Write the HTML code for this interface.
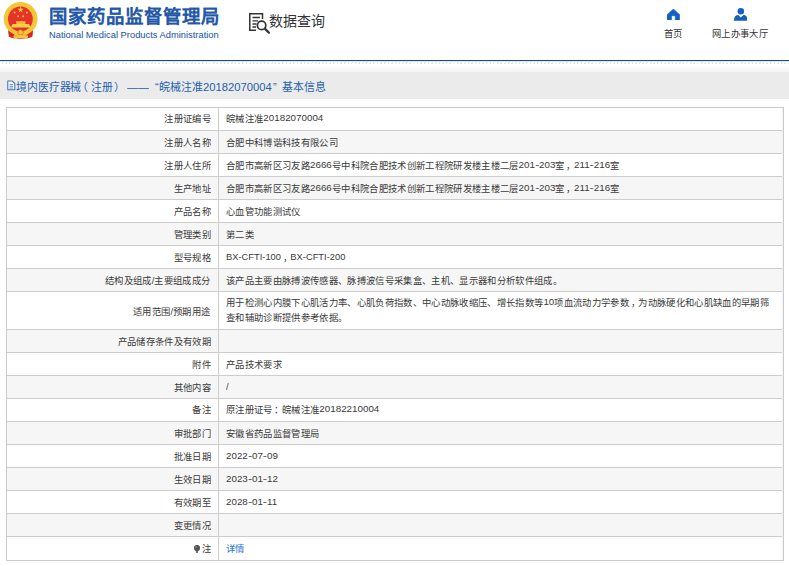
<!DOCTYPE html>
<html lang="zh-CN">
<head>
<meta charset="utf-8">
<title>国家药品监督管理局 数据查询</title>
<style>
html,body{margin:0;padding:0;background:#fff;}
body{width:789px;height:566px;overflow:hidden;position:relative;font-family:"Liberation Sans",sans-serif;color:#333;}
.t,.l,.v{position:absolute;white-space:nowrap;transform:scale(0.778);transform-origin:0 0;}
/* header */
#emblem{position:absolute;left:0;top:0;width:44px;height:44px;}
#title{left:49.3px;top:4px;font-size:23.6px;line-height:32px;font-weight:bold;color:#2357a7;letter-spacing:0.5px;-webkit-text-stroke:0.3px rgba(35,87,167,0.5);}
#sub{left:49.3px;top:29px;font-size:12px;line-height:14px;color:#2357a7;-webkit-text-stroke:0.2px rgba(35,87,167,0.35);}
#dqi{position:absolute;left:247px;top:11px;width:24px;height:24px;}
#dq{left:269.4px;top:10px;font-size:18px;line-height:30px;color:#333;}
.ni{position:absolute;top:8px;}
.nt{top:28px;font-size:12px;line-height:14px;color:#333;}
#line{position:absolute;left:0;top:59.6px;width:789px;height:1.5px;background:#214878;}
#line2{position:absolute;left:0;top:61.1px;width:789px;height:0.8px;background:#d6eefc;}
#dots{position:absolute;left:0;top:62px;width:789px;height:1.7px;background:repeating-linear-gradient(115deg,rgba(255,255,255,0) 0 2.1px,rgba(160,190,225,.38) 2.1px 3.3px);}
#shade{position:absolute;left:0;top:64.5px;width:789px;height:7.5px;background:linear-gradient(#fff,#f3f3f3);}
#band{position:absolute;left:0;top:72px;width:789px;height:26.5px;background:#ebebeb;}
#bicon{position:absolute;left:7.2px;top:80.3px;}
.bt{top:79px;font-size:14px;line-height:20px;color:#1d5fae;}
/* table */
#tb{position:absolute;left:6px;top:107px;width:778px;height:454.2px;box-sizing:border-box;border:1px solid #cbcbcb;}
.r{position:absolute;left:6px;width:778px;background:#fff;}
.hl{position:absolute;left:6px;width:778px;height:1px;background:#cdcdcd;}
.r.e{background:#f6f6f6;}
.l,.v{font-size:12px;line-height:20px;color:#3a3a3a;}
.l{right:578.5px;transform-origin:100% 0;text-align:right;}
.v{left:226px;}
.v b{font-weight:normal;font-size:12.6px;position:relative;top:-1px;}
.v b.x{font-size:12px;}
.v s{text-decoration:none;position:relative;left:2.2px;}
.v s.c{left:2px;}
.v u{display:inline-block;text-decoration:none;transform:scaleX(1.3);margin:0 0.55px;}
#div{position:absolute;left:218px;top:107px;width:1px;height:454px;background:#cdcdcd;}
#rb{position:absolute;left:782px;top:108px;width:1px;height:452px;background:#f1f1f3;}
a{color:#1a73d9;text-decoration:none;}
.pin{display:inline-block;vertical-align:-1.5px;margin-right:2px;}
</style>
</head>
<body>
<!-- header -->
<svg id="emblem" viewBox="0 0 44 44">
 <path d="M8 30 L13.5 32 L14.5 38.6 L9.5 37 Z" fill="#d7261e"/>
 <path d="M33.2 30 L27.7 32 L26.7 38.6 L31.7 37 Z" fill="#d7261e"/>
 <circle cx="20.6" cy="18.9" r="16.9" fill="#f6c637"/>
 <circle cx="20.4" cy="19" r="12.4" fill="#e6332a"/>
 <rect x="16.2" y="21.2" width="9.2" height="3" fill="#f4bd33"/>
 <path d="M12.6 23.9 H29 L30.6 27.4 H11 Z" fill="#f8cf4a"/>
 <path d="M20.6 6.6 l0.75 2.2 h2.3 l-1.85 1.4 l0.7 2.2 l-1.9 -1.35 l-1.9 1.35 l0.7 -2.2 l-1.85 -1.4 h2.3 Z" fill="#f6c637"/>
 <circle cx="14.6" cy="12.5" r="1" fill="#f6c637"/><circle cx="26.8" cy="12.5" r="1" fill="#f6c637"/>
 <circle cx="18.1" cy="16.2" r="1" fill="#f6c637"/><circle cx="23.1" cy="16.2" r="1" fill="#f6c637"/>
 <path d="M8.5 31.5 Q20.6 40 32.7 31.5 L32.5 36.5 Q20.6 41 8.7 36.5 Z" fill="#d7261e"/>
 <circle cx="20.6" cy="32.4" r="2.7" fill="#f6c637" stroke="#e0452c" stroke-width="0.6"/>
 <rect x="13.4" y="35.2" width="14.6" height="2.8" rx="1" fill="#f6c637"/>
</svg>
<div id="title" class="t">国家药品监督管理局</div>
<div id="sub" class="t">National Medical Products Administration</div>
<svg id="dqi" viewBox="0 0 24 24" fill="none" stroke="#333" stroke-width="1.5">
 <path d="M15.5 8 V2.8 H2.8 V19.2 H9"/>
 <path d="M5.5 6.5 H13 M5.5 9.8 H11 M5.5 13 H9.5 M5.5 16 H9" stroke-width="1.3"/>
 <circle cx="14.6" cy="14.4" r="4.2" stroke-width="1.7"/>
 <path d="M17.8 17.6 L22 21.8" stroke-width="2.2" stroke-linecap="round"/>
</svg>
<div id="dq" class="t">数据查询</div>
<svg class="ni" style="left:667.1px;top:8.7px" width="12.8" height="11.8" viewBox="0 0 14 13"><path d="M7 0 L14 6.2 V13 H9 V8 Q9 7.4 8.4 7.4 H5.6 Q5 7.4 5 8 V13 H0 V6.2 Z" fill="#1560c0" stroke="#1560c0" stroke-width="0.6" stroke-linejoin="round"/></svg>
<div class="t nt" style="left:664.1px">首页</div>
<svg class="ni" style="left:733.7px;top:8.3px" width="13.7" height="12.8" viewBox="0 0 15 14"><circle cx="7.5" cy="3.6" r="3.6" fill="#1560c0"/><path d="M0 14 C0 8.5 3 7.6 4.6 7.6 L7.5 10.5 L10.4 7.6 C12 7.6 15 8.5 15 14 Z" fill="#1560c0"/></svg>
<div class="t nt" style="left:712.3px">网上办事大厅</div>
<div id="line"></div><div id="line2"></div><div id="dots"></div><div id="shade"></div>
<div id="band"></div>
<svg id="bicon" width="8.6" height="10.6" viewBox="0 0 10 12" fill="none" stroke="#3a72ba"><path d="M0.9 0.9 H6 L9.1 4 V11.1 H0.9 Z" fill="#fff" stroke-width="1.2"/><path d="M2.8 5.2 H7.2 M2.8 7.2 H7.2 M2.8 9.2 H7.2" stroke-width="0.9"/></svg>
<div class="t bt" style="left:16px">境内医疗器械</div>
<div class="t bt" style="left:77.3px">（</div><div class="t bt" style="left:91.3px">注册</div><div class="t bt" style="left:113.7px">）</div>
<div class="t bt" style="left:126.8px">——</div>
<div class="t bt" style="left:155.2px">“</div><div class="t bt" style="left:159.4px">皖械注准</div><div class="t bt" style="left:203.3px;font-size:14.45px">20182070004</div><div class="t bt" style="left:273.2px">”</div>
<div class="t bt" style="left:281.8px">基本信息</div>
<!-- table -->
<div class="r" style="top:107.5px;height:22.9px"></div>
<div class="l" style="top:111px">注册证编号</div>
<div class="v" style="top:111px">皖械注准<b>20182070004</b></div>
<div class="r e" style="top:130.4px;height:22.9px"></div>
<div class="l" style="top:135px">注册人名称</div>
<div class="v" style="top:135px">合肥中科博谐科技有限公司</div>
<div class="r" style="top:153.3px;height:23.0px"></div>
<div class="l" style="top:158px">注册人住所</div>
<div class="v" style="top:158px">合肥市高新区习友路<b>2666</b>号中科院合肥技术创新工程院研发楼主楼二层<b>201<u>-</u>203</b>室<s>，</s><b>211<u>-</u>216</b>室</div>
<div class="r e" style="top:176.3px;height:22.9px"></div>
<div class="l" style="top:181px">生产地址</div>
<div class="v" style="top:181px">合肥市高新区习友路<b>2666</b>号中科院合肥技术创新工程院研发楼主楼二层<b>201<u>-</u>203</b>室<s>，</s><b>211<u>-</u>216</b>室</div>
<div class="r" style="top:199.2px;height:23.0px"></div>
<div class="l" style="top:204px">产品名称</div>
<div class="v" style="top:204px">心血管功能测试仪</div>
<div class="r e" style="top:222.2px;height:22.9px"></div>
<div class="l" style="top:227px">管理类别</div>
<div class="v" style="top:227px">第二类</div>
<div class="r" style="top:245.1px;height:23.0px"></div>
<div class="l" style="top:250px">型号规格</div>
<div class="v" style="top:250px"><b class="x">BX-CFTI-100</b><s>，</s><b class="x">BX-CFTI-200</b></div>
<div class="r e" style="top:268.1px;height:22.9px"></div>
<div class="l" style="top:273px">结构及组成/主要组成成分</div>
<div class="v" style="top:273px">该产品主要由脉搏波传感器、脉搏波信号采集盒、主机、显示器和分析软件组成。</div>
<div class="r" style="top:291.0px;height:38.4px"></div>
<div class="l" style="top:304px">适用范围/预期用途</div>
<div class="v" style="top:295px">用于检测心内膜下心肌活力率、心肌负荷指数、中心动脉收缩压、增长指数等<b>10</b>项血流动力学参数<s>，</s>为动脉硬化和心肌缺血的早期筛<br>查和辅助诊断提供参考依据。</div>
<div class="r e" style="top:329.4px;height:23.0px"></div>
<div class="l" style="top:334px">产品储存条件及有效期</div>
<div class="r" style="top:352.4px;height:23.0px"></div>
<div class="l" style="top:357px">附件</div>
<div class="v" style="top:357px">产品技术要求</div>
<div class="r e" style="top:375.4px;height:23.0px"></div>
<div class="l" style="top:380px">其他内容</div>
<div class="v" style="top:380px"><b class="x">/</b></div>
<div class="r" style="top:398.4px;height:23.0px"></div>
<div class="l" style="top:402px">备注</div>
<div class="v" style="top:402px">原注册证号<s class="c">：</s>皖械注准<b>20182210004</b></div>
<div class="r e" style="top:421.4px;height:23.0px"></div>
<div class="l" style="top:426px">审批部门</div>
<div class="v" style="top:426px">安徽省药品监督管理局</div>
<div class="r" style="top:444.4px;height:23.0px"></div>
<div class="l" style="top:449px">批准日期</div>
<div class="v" style="top:449px"><b>2022<u>-</u>07<u>-</u>09</b></div>
<div class="r e" style="top:467.4px;height:23.0px"></div>
<div class="l" style="top:472px">生效日期</div>
<div class="v" style="top:472px"><b>2023<u>-</u>01<u>-</u>12</b></div>
<div class="r" style="top:490.4px;height:23.0px"></div>
<div class="l" style="top:495px">有效期至</div>
<div class="v" style="top:495px"><b>2028<u>-</u>01<u>-</u>11</b></div>
<div class="r e" style="top:513.4px;height:23.0px"></div>
<div class="l" style="top:518px">变更情况</div>
<div class="r" style="top:536.4px;height:24.0px"></div>
<div class="l" style="top:541px"><svg class="pin" width="8" height="11" viewBox="0 0 8 11"><circle cx="4" cy="4" r="4" fill="#555"/><circle cx="2.8" cy="2.8" r="1.1" fill="#888"/><rect x="2.6" y="7.6" width="2.8" height="2.7" fill="#666"/></svg>注</div>
<div class="v" style="top:541px"><a>详情</a></div>
<div class="hl" style="top:129.9px"></div>
<div class="hl" style="top:152.8px"></div>
<div class="hl" style="top:175.8px"></div>
<div class="hl" style="top:198.7px"></div>
<div class="hl" style="top:221.7px"></div>
<div class="hl" style="top:244.6px"></div>
<div class="hl" style="top:267.6px"></div>
<div class="hl" style="top:290.5px"></div>
<div class="hl" style="top:328.9px"></div>
<div class="hl" style="top:351.9px"></div>
<div class="hl" style="top:374.9px"></div>
<div class="hl" style="top:397.9px"></div>
<div class="hl" style="top:420.9px"></div>
<div class="hl" style="top:443.9px"></div>
<div class="hl" style="top:466.9px"></div>
<div class="hl" style="top:489.9px"></div>
<div class="hl" style="top:512.9px"></div>
<div class="hl" style="top:535.9px"></div>
<div id="div"></div><div id="rb"></div>
<div id="tb"></div>
</body>
</html>
